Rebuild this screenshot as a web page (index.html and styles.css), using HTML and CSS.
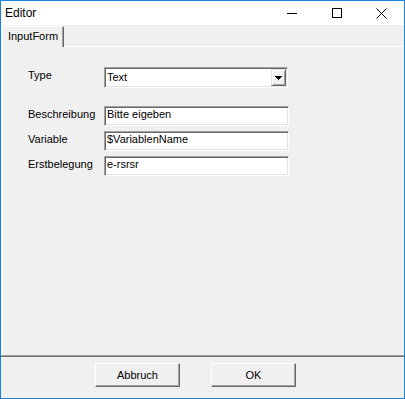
FILE: index.html
```html
<!DOCTYPE html>
<html>
<head>
<meta charset="utf-8">
<link rel="stylesheet" href="styles.css">
</head>
<body>
<div class="window">
  <div class="titlebar">
    <span class="title">Editor</span>
    <div class="caption-buttons">
      <span class="cap-btn"><svg width="10" height="10" viewBox="0 0 10 10"><rect x="0" y="5" width="10" height="1" fill="#000"/></svg></span>
      <span class="cap-btn"><svg width="10" height="10" viewBox="0 0 10 10"><rect x="0.5" y="0.5" width="9" height="9" fill="none" stroke="#000" stroke-width="1"/></svg></span>
      <span class="cap-btn"><svg width="11" height="11" viewBox="0 0 11 11"><path d="M0.5 0.5 L10.5 10.5 M10.5 0.5 L0.5 10.5" stroke="#000" stroke-width="1" fill="none"/></svg></span>
    </div>
  </div>
  <div class="client">
    <div class="tabstrip">
      <div class="tab">InputForm</div>
    </div>
    <div class="panel">
      <div class="form">
        <div class="row row-combo">
          <span class="label">Type</span>
          <div class="combo">
            <span class="combo-text">Text</span>
            <span class="drop"><svg width="7" height="4" viewBox="0 0 7 4"><rect x="0" y="0" width="7" height="1" fill="#000"/><rect x="1" y="1" width="5" height="1" fill="#000"/><rect x="2" y="2" width="3" height="1" fill="#000"/><rect x="3" y="3" width="1" height="1" fill="#000"/></svg></span>
          </div>
        </div>
        <div class="row">
          <span class="label">Beschreibung</span>
          <div class="textbox">Bitte eigeben</div>
        </div>
        <div class="row">
          <span class="label">Variable</span>
          <div class="textbox">$VariablenName</div>
        </div>
        <div class="row">
          <span class="label">Erstbelegung</span>
          <div class="textbox">e-rsrsr</div>
        </div>
      </div>
    </div>
    <div class="footer">
      <button class="btn">Abbruch</button>
      <button class="btn">OK</button>
    </div>
  </div>
</div>
</body>
</html>
```

FILE: styles.css
```css
html, body {
  margin: 0;
  padding: 0;
  background: #fff;
}

.window {
  width: 405px;
  height: 399px;
  box-sizing: border-box;
  border: 1px solid #1883d7;
  display: flex;
  flex-direction: column;
  background: #fff;
  font-family: "Liberation Sans", Arial, sans-serif;
  font-size: 11px;
  color: #000;
}

.titlebar {
  height: 24px;
  flex: none;
  display: flex;
  align-items: center;
  background: #fff;
}

.title {
  flex: 1;
  padding-left: 4px;
  font-size: 12px;
  line-height: 14px;
}

.caption-buttons {
  display: flex;
  height: 24px;
}

.cap-btn {
  width: 45px;
  height: 24px;
  display: flex;
  align-items: center;
  justify-content: center;
}

.client {
  flex: 1;
  display: flex;
  flex-direction: column;
  background: #f0f0f0;
}

.tabstrip {
  height: 21px;
  flex: none;
  box-sizing: border-box;
  padding-left: 1px;
  display: flex;
  align-items: flex-start;
  padding-top: 1px;
}

.tab {
  position: relative;
  z-index: 1;
  width: 62px;
  height: 21px;
  margin-bottom: -1px;
  box-sizing: border-box;
  border-top: 1px solid #fff;
  border-left: 1px solid #fff;
  border-right: 1px solid #696969;
  box-shadow: inset -1px 0 #a0a0a0;
  background: #f0f0f0;
  padding-top: 3px;
  line-height: 13px;
  text-align: center;
}

.panel {
  flex: 1;
  margin-left: 1px;
  border-top: 1px solid #fff;
  border-left: 1px solid #fff;
  padding: 20px 0 0 25px;
}

.form {
  display: flex;
  flex-direction: column;
  gap: 5px;
}

.row {
  display: flex;
  align-items: flex-start;
}

.row-combo {
  margin-bottom: 13px;
}

.label {
  width: 76px;
  padding-top: 2px;
  line-height: 13px;
}

.combo {
  width: 184px;
  height: 21px;
  box-sizing: border-box;
  border: 1px solid;
  border-color: #a0a0a0 #fff #fff #a0a0a0;
  box-shadow: inset 1px 1px #696969, inset -1px -1px #e3e3e3;
  background: #fff;
  display: flex;
  align-items: flex-start;
  padding-left: 2px;
}

.combo-text {
  flex: 1;
  padding-top: 3px;
  line-height: 13px;
}

.drop {
  width: 15px;
  height: 17px;
  margin: 1px;
  box-sizing: border-box;
  border: 1px solid;
  border-color: #e3e3e3 #696969 #696969 #e3e3e3;
  box-shadow: inset 1px 1px #fff, inset -1px -1px #a0a0a0;
  background: #f0f0f0;
  display: flex;
  align-items: center;
  justify-content: center;
}

.textbox {
  width: 185px;
  height: 20px;
  box-sizing: border-box;
  border: 1px solid;
  border-color: #a0a0a0 #fff #fff #a0a0a0;
  box-shadow: inset 1px 1px #696969, inset -1px -1px #e3e3e3;
  background: #fff;
  padding: 1px 0 0 2px;
  line-height: 13px;
}

.footer {
  height: 43px;
  flex: none;
  box-sizing: border-box;
  border-top: 1px solid #a0a0a0;
  box-shadow: inset 0 1px #6d6d6d;
  padding: 7px 0 0 94px;
  display: flex;
  align-items: flex-start;
  gap: 31px;
}

.btn {
  width: 85px;
  height: 24px;
  box-sizing: border-box;
  border: 1px solid;
  border-color: #fff #696969 #696969 #fff;
  box-shadow: inset -1px -1px #a0a0a0;
  background: #f0f0f0;
  font-family: "Liberation Sans", Arial, sans-serif;
  font-size: 11px;
  color: #000;
  padding: 0;
  margin: 0;
  line-height: 13px;
}
```
